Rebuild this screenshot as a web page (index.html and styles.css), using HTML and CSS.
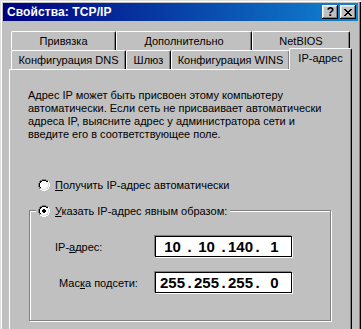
FILE: index.html
```html
<!DOCTYPE html>
<html lang="ru">
    <head>
        <meta charset="UTF-8">
        <title>Свойства: TCP/IP</title>
        <link rel="stylesheet" href="styles.css">
    </head>
    <body>
        <div class="window">
            <div class="titlebar">
                <span class="title">Свойства: TCP/IP</span>
                <div class="title-buttons">
                    <div class="tb-btn help">?</div>
                    <div class="tb-btn close">
                        <svg width="8" height="7" viewBox="0 0 8 7">
                            <path d="M0 0h2v1h-2zM6 0h2v1h-2zM1 1h2v1h-2zM5 1h2v1h-2zM2 2h4v1h-4zM3 3h2v1h-2zM2 4h4v1h-4zM1 5h2v1h-2zM5 5h2v1h-2zM0 6h2v1h-2zM6 6h2v1h-2z" fill="#000"/>
                        </svg>
                    </div>
                </div>
            </div>

            <div class="content">
                <div class="tabs">
                    <div class="tab-row">
                        <div class="tab tab-bind">Привязка</div>
                        <div class="tab tab-extra">Дополнительно</div>
                        <div class="tab tab-netbios">NetBIOS</div>
                    </div>
                    <div class="tab-row">
                        <div class="tab tab-dns">Конфигурация DNS</div>
                        <div class="tab tab-gw">Шлюз</div>
                        <div class="tab tab-wins">Конфигурация WINS</div>
                        <div class="tab tab-ip active">IP-адрес</div>
                    </div>
                </div>

                <div class="page">
                    <p class="intro">
                        Адрес IP может быть присвоен этому компьютеру<br>
                        автоматически. Если сеть не присваивает автоматически<br>
                        адреса IP, выясните адрес у администратора сети и<br>
                        введите его в соответствующее поле.
                    </p>

                    <div class="radio radio-auto">
                        <svg class="radio-icon" width="12" height="12" viewBox="0 0 12 12">
                            <path d="M4 0h4v1h-4zM2 1h2v1h-2zM8 1h2v1h-2zM1 2h1v2h-1zM0 4h1v4h-1zM1 8h1v2h-1z" fill="#808080"/>
                            <path d="M4 1h4v1h-4zM2 2h2v1h-2zM8 2h2v1h-2zM2 3h1v1h-1zM1 4h1v4h-1zM2 8h1v1h-1z" fill="#000"/>
                            <path d="M4 2h4v8h-4zM3 3h6v6h-6zM2 4h8v4h-8z" fill="#fff"/>
                            <path d="M9 3h1v1h-1zM10 4h1v4h-1zM9 8h1v1h-1zM8 9h1v1h-1zM3 9h1v1h-1zM4 10h4v1h-4z" fill="#dfdfdf"/>
                            <path d="M10 2h1v2h-1zM11 4h1v4h-1zM10 8h1v2h-1zM8 10h2v1h-2zM2 10h2v1h-2zM4 11h4v1h-4z" fill="#fff"/>
                        </svg>
                        <span><u>П</u>олучить IP-адрес автоматически</span>
                    </div>

                    <div class="group">
                        <div class="radio group-title">
                            <svg class="radio-icon" width="12" height="12" viewBox="0 0 12 12">
                                <path d="M4 0h4v1h-4zM2 1h2v1h-2zM8 1h2v1h-2zM1 2h1v2h-1zM0 4h1v4h-1zM1 8h1v2h-1z" fill="#808080"/>
                                <path d="M4 1h4v1h-4zM2 2h2v1h-2zM8 2h2v1h-2zM2 3h1v1h-1zM1 4h1v4h-1zM2 8h1v1h-1z" fill="#000"/>
                                <path d="M4 2h4v8h-4zM3 3h6v6h-6zM2 4h8v4h-8z" fill="#fff"/>
                                <path d="M9 3h1v1h-1zM10 4h1v4h-1zM9 8h1v1h-1zM8 9h1v1h-1zM3 9h1v1h-1zM4 10h4v1h-4z" fill="#dfdfdf"/>
                                <path d="M10 2h1v2h-1zM11 4h1v4h-1zM10 8h1v2h-1zM8 10h2v1h-2zM2 10h2v1h-2zM4 11h4v1h-4z" fill="#fff"/>
                                <path d="M5 4h2v4h-2zM4 5h4v2h-4z" fill="#000"/>
                            </svg>
                            <span><u>У</u>казать IP-адрес явным образом:</span>
                        </div>

                        <div class="field-row">
                            <span class="field-label">IP-<u>а</u>дрес:</span>
                            <div class="ipbox">
                                <span class="octet">10</span><span class="dot">.</span>
                                <span class="octet">10</span><span class="dot">.</span>
                                <span class="octet">140</span><span class="dot">.</span>
                                <span class="octet">1</span>
                            </div>
                        </div>

                        <div class="field-row">
                            <span class="field-label mask-label">Мас<u>к</u>а подсети:</span>
                            <div class="ipbox">
                                <span class="octet">255</span><span class="dot">.</span>
                                <span class="octet">255</span><span class="dot">.</span>
                                <span class="octet">255</span><span class="dot">.</span>
                                <span class="octet">0</span>
                            </div>
                        </div>
                    </div>
                </div>
            </div>
        </div>
    </body>
</html>
```

FILE: styles.css
```css
* {
    margin: 0;
    padding: 0;
    box-sizing: border-box;
}

body {
    width: 361px;
    height: 329px;
    overflow: hidden;
    background: #c0c0c0;
    font-family: "Liberation Sans", Arial, sans-serif;
    font-size: 11px;
    color: #000;
}

u {
    text-decoration: underline;
    text-underline-offset: 1px;
}

/* window frame, cut off at the bottom edge */
.window {
    width: 361px;
    height: 329px;
    display: flex;
    flex-direction: column;
    padding: 3px 3px 0 3px;
    background: #c0c0c0;
    box-shadow: inset 1px 1px #dfdfdf, inset 2px 2px #fff,
                inset -1px 0 #000, inset -2px 0 #808080;
}

.titlebar {
    height: 18px;
    flex: none;
    display: flex;
    align-items: center;
    justify-content: space-between;
    padding: 0 2px 0 4px;
    background: linear-gradient(to right, #000080, #1084d0);
}

.title {
    color: #fff;
    font-weight: bold;
    font-size: 12px;
    letter-spacing: 0.1px;
}

.title-buttons {
    display: flex;
    gap: 2px;
}

.tb-btn {
    width: 16px;
    height: 14px;
    display: flex;
    align-items: center;
    justify-content: center;
    background: #c0c0c0;
    box-shadow: inset -1px -1px #000, inset 1px 1px #fff,
                inset -2px -2px #808080, inset 2px 2px #dfdfdf;
}

.tb-btn.help {
    font-weight: bold;
    font-size: 12px;
    line-height: 14px;
    padding-left: 1px;
}

/* tabs */
.content {
    flex: 1;
    display: flex;
    flex-direction: column;
    padding: 10px 6px 0 6px;
}

.tabs {
    padding-left: 2px;
}

.tab-row {
    display: flex;
    height: 19px;
}

.tab {
    height: 19px;
    display: flex;
    align-items: center;
    justify-content: center;
    background: #c0c0c0;
    border-top: 1px solid #fff;
    border-left: 1px solid #fff;
    border-right: 1px solid #000;
    border-radius: 2px 2px 0 0;
    box-shadow: inset -1px 0 #808080;
    white-space: nowrap;
}

.tab-bind { width: 105px; }
.tab-extra { width: 136px; }
.tab-netbios { width: 98px; }
.tab-dns { width: 115px; }
.tab-gw { width: 45px; }
.tab-wins { width: 119px; }
.tab-ip { width: 61px; }

.tab.active {
    position: relative;
    z-index: 1;
    width: 63px;
    height: 22px;
    margin: -2px -2px -1px -1px;
    padding-bottom: 3px;
}

/* page */
.page {
    flex: 1;
    border-top: 1px solid #fff;
    border-left: 1px solid #fff;
    border-right: 1px solid #000;
    box-shadow: inset -1px 0 #808080;
    padding: 0 0 0 18px;
}

.intro {
    padding-top: 19px;
    line-height: 13px;
    white-space: nowrap;
}

.radio {
    display: flex;
    align-items: center;
    gap: 5px;
    height: 13px;
}

.radio-icon {
    flex: none;
}

.radio-auto {
    margin: 37px 0 0 10px;
}

.group {
    width: 302px;
    height: 111px;
    margin: 19px 0 0 1px;
    border: 1px solid #808080;
    box-shadow: inset 1px 1px #fff, 1px 1px #fff;
}

.group-title {
    width: fit-content;
    margin: -7px 0 0 6px;
    padding: 0 3px 0 2px;
    background: #c0c0c0;
}

.field-row {
    display: flex;
    align-items: center;
    height: 21px;
    padding-left: 25px;
}

.group-title + .field-row {
    margin-top: 19px;
}

.field-row + .field-row {
    margin-top: 15px;
}

.field-label {
    width: 100px;
}

.mask-label {
    padding-left: 4px;
}

.ipbox {
    width: 137px;
    height: 21px;
    display: flex;
    align-items: center;
    padding-left: 3px;
    background: #fff;
    border: 1px solid #000;
    box-shadow: -1px -1px #808080, 1px 1px #fff;
    font-weight: bold;
    font-size: 15px;
}

.octet {
    width: 27px;
    text-align: center;
}

.dot {
    width: 7px;
    text-align: center;
}
```
